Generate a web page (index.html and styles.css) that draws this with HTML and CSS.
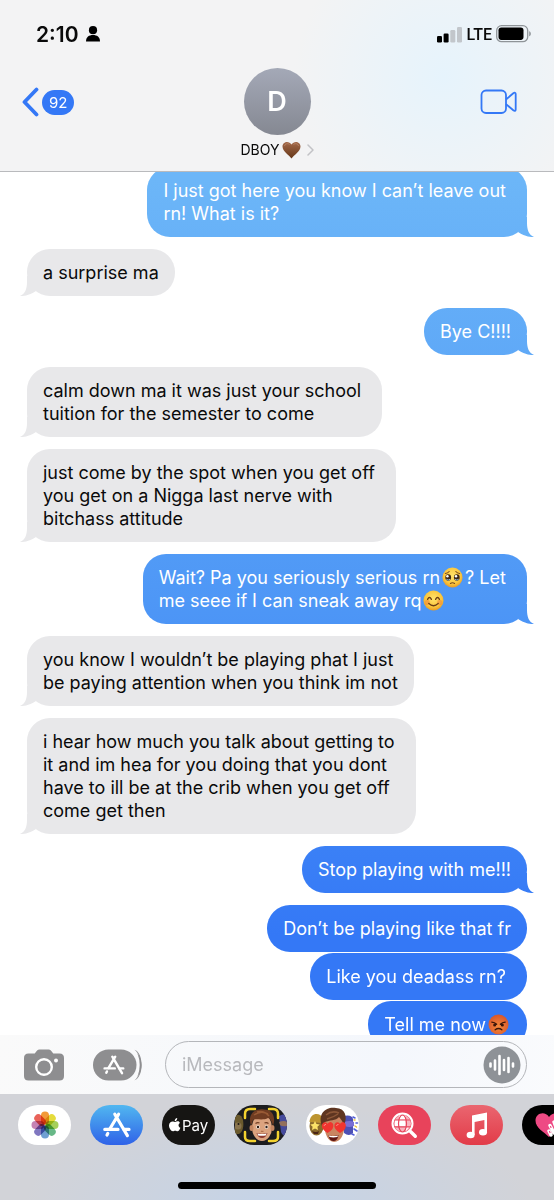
FILE: index.html
```
<!DOCTYPE html>
<html lang="en">
<head>
    <meta charset="UTF-8">
    <meta name="viewport" content="width=device-width, initial-scale=1.0">
    <title>Messages</title>
    <link rel="stylesheet" href="styles.css">
</head>
<body>
    <svg class="defs" aria-hidden="true">
        <defs>
            <radialGradient id="face" cx="50%" cy="40%" r="60%">
                <stop offset="0" stop-color="#ffe36b"/>
                <stop offset="0.7" stop-color="#fbc63c"/>
                <stop offset="1" stop-color="#e79a25"/>
            </radialGradient>
            <radialGradient id="angry" cx="50%" cy="60%" r="60%">
                <stop offset="0" stop-color="#f58a3c"/>
                <stop offset="1" stop-color="#d8552a"/>
            </radialGradient>
            <linearGradient id="brown" x1="0" y1="0" x2="0" y2="1">
                <stop offset="0" stop-color="#a3694a"/>
                <stop offset="1" stop-color="#663718"/>
            </linearGradient>
            <symbol id="appstore" viewBox="0 0 28 26">
                <g fill="none" stroke="currentColor" stroke-width="3.2" stroke-linecap="round">
                    <path d="M15.6 2.2 6.8 17M4.8 21.4 4 23M11.8 2.2 24.4 23.6"/>
                    <path d="M1.8 17.4H15M21 17.4h5"/>
                </g>
            </symbol>
        </defs>
    </svg>

    <div class="phone">
        <header class="header">
            <div class="status">
                <div class="status-left">
                    <span class="time">2:10</span>
                    <svg width="14" height="16" viewBox="0 0 14 16"><circle cx="7" cy="4.2" r="4.1"/><path d="M0 15.5C0 11 3 9 7 9s7 2 7 6.5z"/></svg>
                </div>
                <div class="status-right">
                    <svg width="26" height="17" viewBox="0 0 26 17">
                        <rect x="0" y="10" width="5" height="6.5" rx="1.2"/>
                        <rect x="6.6" y="7.5" width="5" height="9" rx="1.2"/>
                        <rect x="13.3" y="4" width="5" height="12.5" rx="1.2" fill="#c2c6cb"/>
                        <rect x="20" y="1" width="5" height="15.5" rx="1.2" fill="#c2c6cb"/>
                    </svg>
                    <span class="carrier">LTE</span>
                    <svg width="36" height="18" viewBox="0 0 36 18">
                        <rect x="0.7" y="0.7" width="31" height="16" rx="4.8" fill="none" stroke="#8f9498" stroke-width="1.3"/>
                        <rect x="2.5" y="2.5" width="25" height="12.4" rx="2.8"/>
                        <path d="M33.2 6.2c2.2.4 2.2 4.6 0 5z" fill="#8f9498"/>
                    </svg>
                </div>
            </div>

            <div class="nav">
                <a href="#" class="back" aria-label="Back, 92 unread">
                    <svg width="17" height="30" viewBox="0 0 17 30"><path d="M14.5 2.5 2.5 15l12 12.5" fill="none" stroke="#3478f6" stroke-width="3.8" stroke-linecap="round" stroke-linejoin="round"/></svg>
                    <span class="badge">92</span>
                </a>
                <a href="#" class="contact">
                    <span class="avatar">D</span>
                    <span class="contact-name">DBOY
                        <svg width="19" height="18" viewBox="0 0 19 18" role="img" aria-label="brown heart"><path d="M9.5 17.5C7 14 .5 10.500.5 5.500.5.5 7-.8 9.500 3.500 12-.8 18.500.5 18.500 5.500c0 5-6.500 8.500-9 12z" fill="url(#brown)"/><path d="M2.500 5C3 2.500 6 2 7.500 3.500M11.500 3.500C13 2 16 2.500 16.500 5" fill="none" stroke="#c39274" stroke-width="1" opacity=".6"/></svg>
                        <svg class="chevron" width="7" height="12" viewBox="0 0 7 12"><path d="m1 1 5 5-5 5" fill="none" stroke="#c2c2c6" stroke-width="1.5" stroke-linecap="round" stroke-linejoin="round"/></svg>
                    </span>
                </a>
                <button class="facetime" aria-label="FaceTime">
                    <svg width="38" height="26" viewBox="0 0 38 26" fill="none" stroke="#3478f6" stroke-width="1.8" stroke-linejoin="round"><rect x="1.5" y="1.5" width="24.5" height="22.5" rx="4.5"/><path d="M26 10.500 33.300 4.300c1.400-1.100 2.400-.6 2.400.8v15.400c0 1.400-1 1.900-2.400.8L26 15.100"/></svg>
                </button>
            </div>
        </header>

        <main class="chat">
            <p class="bubble sent tail">I just got here you know I can’t leave out&nbsp;<br>rn! What is it?</p>
            <p class="bubble received tail">a surprise ma</p>
            <p class="bubble sent tail">Bye C!!!!</p>
            <p class="bubble received tail">calm down ma it was just your school&nbsp;<br>tuition for the semester to come</p>
            <p class="bubble received tail">just come by the spot when you get off&nbsp;<br>you get on a Nigga last nerve with&nbsp;<br>bitchass attitude</p>
            <p class="bubble sent tail">Wait? Pa you seriously serious rn<svg class="emoji" viewBox="0 0 22 22" role="img" aria-label="pleading face"><circle cx="11" cy="11" r="10.5" fill="url(#face)"/><ellipse cx="6.5" cy="11" rx="3" ry="3.3" fill="#3d2716"/><ellipse cx="15.5" cy="11" rx="3" ry="3.3" fill="#3d2716"/><circle cx="5.7" cy="9.7" r="1.3" fill="#fff"/><circle cx="14.7" cy="9.7" r="1.3" fill="#fff"/><path d="M4.5 12.8q2 1.800 4 0M13.500 12.800q2 1.800 4 0" fill="none" stroke="#8fbbe0" stroke-width="1"/><path d="M3.500 6.800Q6 6.500 7.500 4.700M18.500 6.800Q16 6.500 14.500 4.700M8.800 17.300q2.200-1.600 4.400 0" fill="none" stroke="#79491b" stroke-width="1.1" stroke-linecap="round"/></svg>? Let&nbsp;<br>me seee if I can sneak away rq<svg class="emoji" viewBox="0 0 22 22" role="img" aria-label="smiling face"><circle cx="11" cy="11" r="10.5" fill="url(#face)"/><circle cx="4.5" cy="13" r="2.7" fill="#f28a3d" opacity=".6"/><circle cx="17.5" cy="13" r="2.7" fill="#f28a3d" opacity=".6"/><path d="M4.800 9.800q2-3.800 4 0M13.200 9.800q2-3.800 4 0M6 14q5 5 10 0" fill="none" stroke="#6b3d14" stroke-width="1.4" stroke-linecap="round"/></svg></p>
            <p class="bubble received tail">you know I wouldn’t be playing phat I just&nbsp;<br>be paying attention when you think im not</p>
            <p class="bubble received tail">i hear how much you talk about getting to&nbsp;<br>it and im hea for you doing that you dont&nbsp;<br>have to ill be at the crib when you get off&nbsp;<br>come get then</p>
            <p class="bubble sent tail">Stop playing with me!!!</p>
            <p class="bubble sent">Don’t be playing like that fr</p>
            <p class="bubble sent joined">Like you deadass rn?&nbsp;</p>
            <p class="bubble sent joined">Tell me now<svg class="emoji" viewBox="0 0 22 22" role="img" aria-label="angry face"><circle cx="11" cy="11" r="10.5" fill="url(#angry)"/><circle cx="7" cy="11.5" r="1.6" fill="#3a1509"/><circle cx="15" cy="11.5" r="1.6" fill="#3a1509"/><path d="M4 8.500q3 .2 5 2.200M18 8.500q-3 .2-5 2.200M7.500 16.500q3.500-2.600 7 0" fill="none" stroke="#3a1509" stroke-width="1.4" stroke-linecap="round"/></svg></p>
        </main>

        <footer>
            <form class="compose">
                <button type="button" aria-label="Camera">
                    <svg width="40" height="32" viewBox="0 0 40 32"><path d="M4.500 4.500h6.200l2.400-3Q14 .5 15.500.5h9q1.500 0 2.400 1l2.400 3h6.200Q40 4.500 40 9v18q0 4.500-4.500 4.500h-31Q0 31.500 0 27V9q0-4.500 4.500-4.500z" fill="#8e8e90"/><circle cx="20" cy="18" r="7.8" fill="none" stroke="#fff" stroke-width="2.4"/><circle cx="32" cy="11.6" r="2" fill="#fff"/></svg>
                </button>
                <button type="button" aria-label="Apps">
                    <svg width="50" height="32" viewBox="0 0 50 32"><rect x="0" y=".5" width="43.5" height="31" rx="15.5" fill="#8e8e90"/><path d="M40.500 2c7.600 5 7.600 23 0 28 10.600-4 10.600-24 0-28z" fill="#8e8e90"/><path d="M38.500 0c9.500 5 9.500 27 0 32" fill="none" stroke="#fafafb" stroke-width="2"/><path d="M41.500.8c8 6 8 24.400 0 30.400 9.500-3 9.500-27.400 0-30.400z" fill="#8e8e90"/><use href="#appstore" x="10" y="6" width="22" height="20" color="#fff"/></svg>
                </button>
                <div class="field">
                    <input type="text" aria-label="Message" placeholder="iMessage">
                    <button type="button" aria-label="Record audio">
                        <svg width="38" height="38" viewBox="0 0 38 38"><circle cx="19" cy="19" r="18.5" fill="#8e9297"/><path d="M7.500 17.500v3M12 14.500v9M16.500 10v18M21 14v10M25.500 12v14M30 17.500v3" stroke="#fff" stroke-width="2.6" stroke-linecap="round"/></svg>
                    </button>
                </div>
            </form>

            <div class="drawer">
                <div class="apps">
                    <button class="app photos" aria-label="Photos">
                        <svg width="28" height="28" viewBox="-14 -14 28 28">
                            <g class="petals">
                                <rect x="-4" y="-13.5" width="8" height="13" rx="4" fill="#f29a38"/>
                                <rect x="-4" y="-13.5" width="8" height="13" rx="4" fill="#e5dc3c" transform="rotate(45)"/>
                                <rect x="-4" y="-13.5" width="8" height="13" rx="4" fill="#a5cf5a" transform="rotate(90)"/>
                                <rect x="-4" y="-13.5" width="8" height="13" rx="4" fill="#67b887" transform="rotate(135)"/>
                                <rect x="-4" y="-13.5" width="8" height="13" rx="4" fill="#6f9fd2" transform="rotate(180)"/>
                                <rect x="-4" y="-13.5" width="8" height="13" rx="4" fill="#8077c0" transform="rotate(225)"/>
                                <rect x="-4" y="-13.5" width="8" height="13" rx="4" fill="#c583b4" transform="rotate(270)"/>
                                <rect x="-4" y="-13.5" width="8" height="13" rx="4" fill="#e9635a" transform="rotate(315)"/>
                            </g>
                        </svg>
                    </button>
                    <button class="app store" aria-label="App Store">
                        <svg width="28" height="26"><use href="#appstore"/></svg>
                    </button>
                    <button class="app pay" aria-label="Apple Pay">
                        <svg width="12" height="14" viewBox="0 0 12 14" fill="#fff"><path d="M8.200 0c.2 1.600-1 3.100-2.500 3.200C5.500 1.700 6.800.2 8.200 0zM10.900 4.900c-2 1.300-1.700 3.900.5 4.800-.6 1.700-1.700 3.600-2.900 3.600-1 0-1.200-.6-2.300-.6s-1.400.6-2.300.6C1.900 13.300 0 10 0 7.600c0-3 2-4.200 3.600-4.200 1 0 1.800.6 2.600.6.700 0 1.600-.7 2.800-.7.800 0 1.500.7 1.900 1.600z"/></svg>
                        <span>Pay</span>
                    </button>
                    <button class="app memoji" aria-label="Memoji">
                        <svg width="52" height="40" viewBox="0 0 52 40">
                            <path d="M0 11c4-3 7 0 8 4 1 6 0 12-4 14H0z" fill="#6b5a2d"/><circle cx="3" cy="21" r="3.5" fill="#8a744d"/><circle cx="3.5" cy="19" r="1" fill="#1c1611"/>
                            <path d="M44 11q5-3 8-1v21q-4 1-6-4z" fill="#454a9c"/><path d="M44 17q5-2 8 0v4q-5 1-7-1z" fill="#93705c"/>
                            <ellipse cx="27" cy="22.5" rx="10" ry="13.5" fill="#dca37f"/>
                            <ellipse cx="16.5" cy="23" rx="2" ry="3" fill="#c58661"/><ellipse cx="37.5" cy="23" rx="2" ry="3" fill="#c58661"/>
                            <path d="M16 21C12 9 20 3 29 4.500c9 0 12 8 9 16.500-1-4-2-7-5-8-5 3-13 0-15 2z" fill="#703c22"/>
                            <path d="M19 10q7-5 14-1M22 7q7-2 12 4" fill="none" stroke="#985a35" stroke-width="1.5"/>
                            <path d="M20.500 18.500q2-1.500 4-.5M29.500 18q2-1 4 .5" fill="none" stroke="#703c22" stroke-width="1.2"/>
                            <circle cx="23" cy="22" r="1.8" fill="#fff"/><circle cx="31.5" cy="22" r="1.8" fill="#fff"/><circle cx="23" cy="22" r="1.2" fill="#2c1a12"/><circle cx="31.5" cy="22" r="1.2" fill="#2c1a12"/>
                            <path d="M26 26q1.200 1 2.400 0" fill="none" stroke="#b06f4c" stroke-width="1.2"/>
                            <path d="M21.500 28q5.500 1.500 11 0-1.500 5-5.500 5t-5.500-5z" fill="#8c3a30"/><path d="M22.300 28.400q4.700 1.200 9.400 0l-1 2q-4 .8-7.500 0z" fill="#fff"/>
                            <path d="M10 13V9q0-5 5-5h5M34 4h4q5 0 5 5v4M43 27v5q0 4-5 4h-4M20 36h-5q-5 0-5-4v-5" fill="none" stroke="#f3d22f" stroke-width="2.5" stroke-linecap="round"/>
                        </svg>
                    </button>
                    <button class="app stickers" aria-label="Memoji stickers">
                        <svg width="52" height="40" viewBox="0 0 52 40">
                            <ellipse cx="9.5" cy="21" rx="7" ry="9.5" fill="#8a6a2b"/><path d="M2.500 17C3 7 14 7 16 14l-1 4z" fill="#bd9530"/><path d="m8 16 1.500 3 3.300.4-2.400 2.300.6 3.300-3-1.600-3 1.600.6-3.300L3.300 19.400l3.200-.4z" fill="#fbe268"/><path d="M5 26q4 2 7 0l-1 3H7z" fill="#4a2416"/>
                            <path d="M36 11q9-2 10 3v14q-4 4-9 0z" fill="#4d50b5"/><path d="M37 17q6-2 10 0v4q-5 2-9 0z" fill="#7a6fd4"/><path d="m46 12 2 1M49 18h1.500M47 24l3 2M45 29l2 1" stroke="#5560d8" stroke-width="1.6" stroke-linecap="round"/><path d="m48 21 1.500 1M47 15h1" stroke="#ebc33e" stroke-width="1.5" stroke-linecap="round"/>
                            <path d="M17 18q0-9 10-9t10.500 9q0 18-10.500 19Q18 36 17 18z" fill="#c98561"/>
                            <path d="M15 21C10 8 20 1 29 3c9 0 12 9 8 17-1-3-3-6-5-8-3 4-10 3-14 5-1 1-1 3-3 4z" fill="#5e3521"/><path d="M19 10q6-5 13-2M20 14q7-2 11-5" fill="none" stroke="#8b5637" stroke-width="1.5"/>
                            <path d="M20.500 28Q14 24 15 19.500q2-4 5.500-.8 3-3.500 5.500 0 2 5-5.500 9.300zM33 28q-6.500-4-5.500-8.500 2-4 5.500-.8 3-3.500 5.500 0 2 5-5.500 9.300z" fill="#f0352f"/><path d="M17 21q.5-2 2-1.500M29.500 21q.5-2 2-1.500" fill="none" stroke="#ff8a80" stroke-width="1"/>
                            <path d="M21.500 30.500q5.500 1 10-.5-1 6-5 6t-5-5.500z" fill="#5e1714"/><path d="M22 30.500q5 1 9 0l-.6 1.600q-4 .8-8 0z" fill="#fff"/>
                        </svg>
                    </button>
                    <button class="app images" aria-label="Images">
                        <svg width="27" height="27" viewBox="0 0 27 27"><circle cx="11.5" cy="11.5" r="8.5" fill="#f7b5bf"/><path d="M8 3.500h6.500v4H8zM4 8h3.500v6.500H4zM8 8h6.500v6.500H8zM15 15h3l-3 4z" fill="#fff"/><g fill="none" stroke="#e8465c" stroke-width="1.2"><path d="M2 8h19M2 14.800h19"/><ellipse cx="11.5" cy="11.5" rx="4" ry="8.5"/></g><circle cx="11.5" cy="11.5" r="10" fill="none" stroke="#fff" stroke-width="2"/><path d="m19.500 19.500 4.800 4.800" stroke="#fff" stroke-width="3.4" stroke-linecap="round"/></svg>
                    </button>
                    <button class="app music" aria-label="Music">
                        <svg width="22" height="27" viewBox="0 0 22 27" fill="#fff"><path d="M6 3.500 21 .5v19.500h-2.600V8L8.600 10v13H6z"/><ellipse cx="4.6" cy="23" rx="4" ry="3.3"/><ellipse cx="17" cy="20.2" rx="4" ry="3.3"/></svg>
                    </button>
                    <button class="app touch" aria-label="Digital Touch">
                        <svg width="28" height="26" viewBox="0 0 28 26"><path d="M14 25C9 20 .5 16 .5 8.500.5 1 10-1.500 14 5c4-6.500 13.500-4 13.500 3.500C27.500 16 19 20 14 25z" fill="#ee4a84"/><path d="M16 23l-2-4M19 21l-4-7.500M22 18 19 10" stroke="#fff" stroke-width="3.4" stroke-linecap="round"/><path d="m14.500 19.500.5 1M15.500 14.500l.5 1M19.500 11l.5 1" stroke="#ee4a84" stroke-width="1.2" stroke-linecap="round"/></svg>
                    </button>
                </div>
                <div class="home-bar"></div>
            </div>
        </footer>
    </div>
</body>
</html>
```
FILE: styles.css
```
* {
    box-sizing: border-box;
}
body {
    margin: 0;
    font-family: Inter, "Liberation Sans", sans-serif;
    color: #0a0a0a;
    background: #fff;
}
button {
    display: flex;
    padding: 0;
    border: none;
    background: none;
    cursor: pointer;
}
a {
    color: inherit;
    text-decoration: none;
}
svg {
    flex-shrink: 0;
}
.defs {
    position: absolute;
    width: 0;
    height: 0;
}
.phone {
    display: flex;
    flex-direction: column;
    height: 100vh;
    overflow: hidden;
}

/* header */
.header {
    padding: 22px 22px 10px;
    background: radial-gradient(circle at 80% 45%, #e6f3fc, transparent 150px), #f3f3f4;
    border-bottom: 1px solid #b9babd;
}
.status {
    display: flex;
    justify-content: space-between;
    align-items: center;
    height: 24px;
    padding-left: 14px;
}
.status-left {
    display: flex;
    align-items: center;
    gap: 7px;
}
.status-right {
    display: flex;
    align-items: center;
    gap: 4px;
}
.time {
    font-size: 21px;
    font-weight: 600;
}
.carrier {
    font-family: Roboto, sans-serif;
    font-size: 16px;
    font-weight: 500;
}
.nav {
    display: grid;
    grid-template-columns: 1fr auto 1fr;
    margin-top: 22px;
}
.back {
    display: flex;
    align-items: center;
    gap: 3px;
    height: 68px;
}
.badge {
    padding: 0 7px;
    border-radius: 13px;
    background: #3478f6;
    color: #fff;
    font-size: 15px;
    line-height: 25px;
}
.contact {
    display: flex;
    flex-direction: column;
    align-items: center;
    gap: 4px;
}
.avatar {
    width: 67px;
    height: 67px;
    border-radius: 50%;
    background: linear-gradient(#a4a9b7, #858892);
    color: #fff;
    font-size: 27px;
    font-weight: 600;
    line-height: 68px;
    text-align: center;
}
.contact-name {
    display: flex;
    align-items: center;
    gap: 2px;
    font-size: 14px;
    line-height: 22px;
}
.chevron {
    margin-left: 4px;
}
.facetime {
    justify-self: end;
    align-items: center;
    height: 68px;
    margin-right: 14px;
}

/* messages */
.chat {
    display: flex;
    flex: 1;
    flex-direction: column;
    align-items: flex-start;
    gap: 12px;
    min-height: 0;
    padding: 0 27px;
    overflow: hidden;
}
.bubble {
    position: relative;
    flex-shrink: 0;
    margin: 0;
    padding: 12px 16px;
    border-radius: 23px;
    font-size: 18px;
    line-height: 23px;
    white-space: nowrap;
}
.bubble:first-child {
    margin-top: -5px;
}
.received {
    background: #e8e8ea;
}
.sent {
    align-self: flex-end;
    color: #fff;
}
.sent,
.sent.tail::after {
    background: linear-gradient(#6cb6f8 15%, #4e97f6 50%, #3478f6 78%) fixed;
}
.joined {
    margin-top: -11px;
}
.tail::after {
    content: "";
    position: absolute;
    bottom: 0;
    width: 24px;
    height: 20px;
}
.sent.tail::after {
    right: -7px;
    clip-path: path("M17 0V6C17 13 19 18 24 20C21 20 16 20 8 15L12 0Z");
}
.received.tail::after {
    left: -7px;
    background: #e8e8ea;
    clip-path: path("M7 0V6C7 13 5 18 0 20C3 20 8 20 16 15L12 0Z");
}
.emoji {
    width: 21px;
    height: 21px;
    margin: 0 2px;
    vertical-align: -4px;
}

/* compose bar */
.compose {
    display: flex;
    align-items: center;
    height: 59px;
    padding: 0 27px 0 24px;
    background: linear-gradient(100deg, #fafafa, #f4f7fc 70%, #fafbfd);
}
.compose > button {
    margin-right: 29px;
}
.compose > button + button {
    margin-right: 22px;
}
.field {
    display: flex;
    flex: 1;
    align-items: center;
    height: 47px;
    padding: 0 5px 0 16px;
    border: 1px solid #b4b6ba;
    border-radius: 24px;
}
.field input {
    flex: 1;
    min-width: 0;
    padding: 0;
    border: none;
    outline: none;
    background: none;
    font: inherit;
    font-size: 18px;
}
.field input::placeholder {
    color: #b8b9bd;
    opacity: 1;
}

/* app drawer */
.drawer {
    padding: 11px 0;
    background: radial-gradient(ellipse at 50% 110%, #c4d3e8, transparent 65%), #d2d3d8;
}
.apps {
    display: flex;
    gap: 19px;
    padding-left: 18px;
    overflow: hidden;
}
.app {
    flex: 0 0 53px;
    justify-content: center;
    align-items: center;
    height: 40px;
    border-radius: 20px;
    overflow: hidden;
}
.photos,
.stickers {
    background: #fff;
}
.petals rect {
    mix-blend-mode: multiply;
}
.store {
    background: linear-gradient(#51b7f0, #2f62e8);
    color: #fff;
}
.pay {
    gap: 1px;
    background: #161513;
    color: #fff;
    font-family: inherit;
    font-size: 15px;
}
.memoji {
    background: #1c1c1e;
}
.images {
    background: #e8435b;
}
.music {
    background: linear-gradient(#ea6670, #e23b48);
}
.touch {
    background: #000;
}
.home-bar {
    width: 198px;
    height: 7px;
    margin: 37px auto 0;
    border-radius: 4px;
    background: #000;
}
```
